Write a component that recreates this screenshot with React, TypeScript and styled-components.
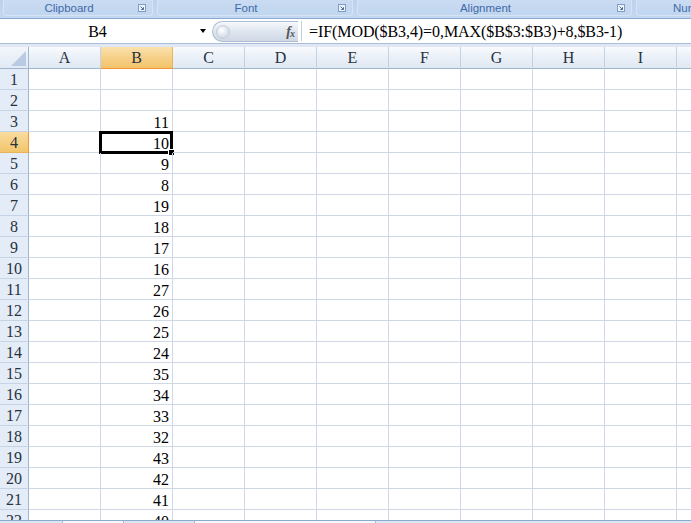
import React from "react";
import styled, { createGlobalStyle } from "styled-components";

const Global = createGlobalStyle`
  html, body { margin: 0; padding: 0; background: #fff; }
  body { width: 691px; height: 523px; overflow: hidden; }
`;

const Root = styled.div`
  width: 691px;
  height: 523px;
  overflow: hidden;
  display: flex;
  flex-direction: column;
  background: #fff;
`;

const Ribbon = styled.div`
  flex: none;
  height: 19px;
  box-sizing: border-box;
  display: flex;
  gap: 4px;
  padding-left: 3px;
  background: linear-gradient(#bcd1ed, #c4d8f1);
  border-bottom: 1px solid #8eaad2;
  overflow: hidden;
`;

const Group = styled.div<{ $w?: number; $left?: number }>`
  position: relative;
  flex: ${(p) => (p.$w ? "none" : "1")};
  width: ${(p) => (p.$w ? `${p.$w}px` : "auto")};
  height: 16px;
  box-sizing: border-box;
  display: flex;
  align-items: center;
  justify-content: ${(p) => (p.$left ? "flex-start" : "center")};
  padding: ${(p) => (p.$left ? `0 0 0 ${p.$left}px` : "0 18px 0 0")};
  background: linear-gradient(#cadcf2, #c0d5ef);
  border: 1px solid #d6e3f4;
  border-top: none;
  border-radius: 0 0 4px 4px;
  font: 11.5px "Liberation Sans", Arial, sans-serif;
  color: #3f6aa8;
  white-space: nowrap;
`;

const Launcher = styled.svg`
  position: absolute;
  right: 6px;
  top: 4px;
`;

const FormulaBar = styled.div`
  flex: none;
  height: 25px;
  box-sizing: border-box;
  display: flex;
  align-items: stretch;
  background: #fff;
  border-bottom: 1px solid #a9bdd6;
`;

const NameBox = styled.div`
  flex: none;
  width: 212px;
  display: flex;
  align-items: center;
  padding-top: 2px;
  box-sizing: border-box;
  font: 16px "Liberation Serif", "Times New Roman", serif;
  color: #000;
`;

const NameText = styled.span`
  flex: none;
  width: 195px;
  text-align: center;
`;

const Arrow = styled.span`
  width: 0;
  height: 0;
  margin-left: 5px;
  margin-top: -2px;
  border-left: 3px solid transparent;
  border-right: 3px solid transparent;
  border-top: 4px solid #000;
`;

const Gadget = styled.div`
  flex: none;
  width: 86px;
  margin: 2px 0 1px;
  box-sizing: border-box;
  border: 1px solid #aebdd1;
  border-right: none;
  border-radius: 11px 0 0 11px;
  background: linear-gradient(#f7f9fb, #dde4ee 55%, #cfd8e5);
  display: flex;
  align-items: center;
  justify-content: space-between;
  padding: 0 4px 0 3px;
`;

const Knob = styled.span`
  width: 14px;
  height: 14px;
  border-radius: 50%;
  background: radial-gradient(circle at 40% 35%, #ffffff, #d3dbe6 70%);
  border: 1px solid #c3cdd9;
  box-sizing: border-box;
`;

const Fx = styled.span`
  font: italic bold 14px "Liberation Serif", "Times New Roman", serif;
  color: #555;
  letter-spacing: -1px;
  sub {
    font-size: 10px;
    vertical-align: -1px;
  }
`;

const FormulaSep = styled.div`
  flex: none;
  width: 1px;
  margin: 2px 0 2px 3px;
  background: #c3cfdd;
`;

const FormulaText = styled.div`
  flex: 1;
  display: flex;
  align-items: center;
  padding: 2px 0 0 7px;
  font: 16px "Liberation Serif", "Times New Roman", serif;
  letter-spacing: -0.08px;
  color: #000;
  white-space: nowrap;
`;

const Band = styled.div`
  flex: none;
  height: 3px;
  background: #dfe8f4;
`;

const Sheet = styled.div`
  flex: 1;
  min-height: 0;
  overflow: hidden;
  display: grid;
  grid-template-columns: 29px repeat(10, 72px);
  grid-template-rows: 22px;
  grid-auto-rows: 21px;
`;

const Corner = styled.div`
  box-sizing: border-box;
  position: relative;
  background: linear-gradient(#f3f6fb, #e1e9f4);
  border-right: 1px solid #9eb6ce;
  border-bottom: 1px solid #9eb6ce;
  &::after {
    content: "";
    position: absolute;
    right: 2px;
    bottom: 2px;
    width: 0;
    height: 0;
    border-left: 15px solid transparent;
    border-bottom: 15px solid #b9cbe3;
  }
`;

const ColHead = styled.div<{ $sel?: boolean }>`
  box-sizing: border-box;
  display: flex;
  align-items: center;
  justify-content: center;
  font: 16px "Liberation Serif", "Times New Roman", serif;
  color: #27323f;
  background: ${(p) =>
    p.$sel
      ? "linear-gradient(#fae2ad, #f6d089 50%, #f2c36a)"
      : "linear-gradient(#f8fafd, #eaf0f8 50%, #e0e8f3)"};
  border-right: 1px solid ${(p) => (p.$sel ? "#e9b559" : "#c3d2e3")};
  border-bottom: 1px solid ${(p) => (p.$sel ? "#f29536" : "#9eb6ce")};
`;

const RowHead = styled.div<{ $sel?: boolean }>`
  box-sizing: border-box;
  display: flex;
  align-items: center;
  justify-content: center;
  padding-top: 2px;
  font: 16px "Liberation Serif", "Times New Roman", serif;
  color: #27323f;
  background: ${(p) =>
    p.$sel ? "linear-gradient(#f9dc9f, #f2c56c)" : "#e4ecf7"};
  border-right: 1px solid ${(p) => (p.$sel ? "#f29536" : "#9eb6ce")};
  border-bottom: 1px solid ${(p) => (p.$sel ? "#e9b559" : "#c5d3e4")};
`;

const Cell = styled.div`
  position: relative;
  box-sizing: border-box;
  border-right: 1px solid #d0d7e5;
  border-bottom: 1px solid #d0d7e5;
  font: 16px "Liberation Serif", "Times New Roman", serif;
  color: #000;
  text-align: right;
  line-height: 23px;
  padding-right: 3px;
  white-space: nowrap;
`;

const Selection = styled.div`
  position: absolute;
  left: -2px;
  top: -1px;
  width: 74px;
  height: 23px;
  box-sizing: border-box;
  border: 3px solid #000;
  pointer-events: none;
`;

const Handle = styled.div`
  position: absolute;
  right: -5px;
  bottom: -5px;
  width: 7px;
  height: 7px;
  box-sizing: border-box;
  background: #000;
  border: 1px solid #fff;
`;

const TabBar = styled.div`
  flex: none;
  height: 3px;
  display: flex;
  background: #dce6f3;
  border-top: 1px solid #8ca9d0;
  box-sizing: border-box;
`;

const Tab = styled.div<{ $w: number; $ml: number }>`
  flex: none;
  width: ${(p) => p.$w}px;
  margin-left: ${(p) => p.$ml}px;
  background: #f4f7fb;
  border-left: 1px solid #a7b9d0;
  border-right: 1px solid #a7b9d0;
`;

const LauncherIcon = () => (
  <Launcher width="8" height="8" viewBox="0 0 8 8">
    <rect x="0.5" y="0.5" width="7" height="7" fill="#eef3fa" stroke="#7f9cc4" />
    <path d="M2.5 2.5 L5.5 5.5 M5.5 3.2 V5.5 H3.2" stroke="#4a6fa5" strokeWidth="1" fill="none" />
  </Launcher>
);

const columns = ["A", "B", "C", "D", "E", "F", "G", "H", "I", "J"];
const values: Record<number, number> = {
  3: 11, 4: 10, 5: 9, 6: 8, 7: 19, 8: 18, 9: 17, 10: 16, 11: 27, 12: 26,
  13: 25, 14: 24, 15: 35, 16: 34, 17: 33, 18: 32, 19: 43, 20: 42, 21: 41, 22: 40,
};
const rows = Array.from({ length: 22 }, (_, i) => i + 1);

export default function App() {
  return (
    <Root>
      <Global />
      <Ribbon>
        <Group $w={150}>
          Clipboard
          <LauncherIcon />
        </Group>
        <Group $w={196}>
          Font
          <LauncherIcon />
        </Group>
        <Group $w={275}>
          Alignment
          <LauncherIcon />
        </Group>
        <Group $left={36}>Number</Group>
      </Ribbon>
      <FormulaBar>
        <NameBox>
          <NameText>B4</NameText>
          <Arrow />
        </NameBox>
        <Gadget>
          <Knob />
          <Fx>
            f<sub>x</sub>
          </Fx>
        </Gadget>
        <FormulaSep />
        <FormulaText>=IF(MOD($B3,4)=0,MAX($B$3:$B3)+8,$B3-1)</FormulaText>
      </FormulaBar>
      <Band />
      <Sheet>
        <Corner />
        {columns.map((c) => (
          <ColHead key={c} $sel={c === "B"}>
            {c}
          </ColHead>
        ))}
        {rows.map((r) => (
          <React.Fragment key={r}>
            <RowHead $sel={r === 4}>{r}</RowHead>
            {columns.map((c) => (
              <Cell key={c}>
                {c === "B" && values[r] !== undefined ? values[r] : ""}
                {c === "B" && r === 4 && (
                  <Selection>
                    <Handle />
                  </Selection>
                )}
              </Cell>
            ))}
          </React.Fragment>
        ))}
      </Sheet>
      <TabBar>
        <Tab $w={60} $ml={62} />
        <Tab $w={180} $ml={70} />
      </TabBar>
    </Root>
  );
}
